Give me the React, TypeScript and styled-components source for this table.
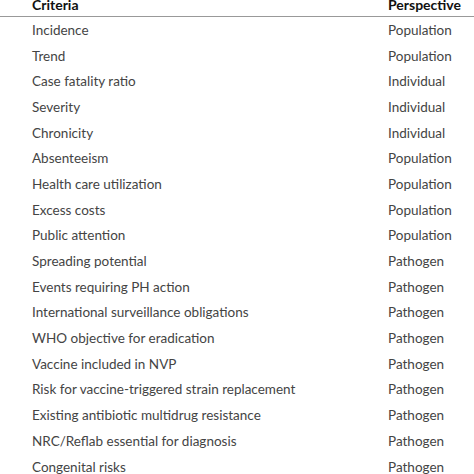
import React from "react";
import styled, { createGlobalStyle } from "styled-components";

const GlobalStyle = createGlobalStyle`
  html, body {
    margin: 0;
    padding: 0;
    background: #fff;
    overflow: hidden;
  }
  body {
    font-family: "Lato", "Open Sans", sans-serif;
  }
`;

const rows: [string, string][] = [
  ["Incidence", "Population"],
  ["Trend", "Population"],
  ["Case fatality ratio", "Individual"],
  ["Severity", "Individual"],
  ["Chronicity", "Individual"],
  ["Absenteeism", "Population"],
  ["Health care utilization", "Population"],
  ["Excess costs", "Population"],
  ["Public attention", "Population"],
  ["Spreading potential", "Pathogen"],
  ["Events requiring PH action", "Pathogen"],
  ["International surveillance obligations", "Pathogen"],
  ["WHO objective for eradication", "Pathogen"],
  ["Vaccine included in NVP", "Pathogen"],
  ["Risk for vaccine-triggered strain replacement", "Pathogen"],
  ["Existing antibiotic multidrug resistance", "Pathogen"],
  ["NRC/Reflab essential for diagnosis", "Pathogen"],
  ["Congenital risks", "Pathogen"],
];

const Table = styled.div`
  width: 474px;
  margin-top: -7px;
`;

const HeaderRow = styled.div`
  display: grid;
  grid-template-columns: 1fr 86px;
  padding-left: 32px;
  height: 24px;
  align-items: center;
  border-bottom: 1.5px solid #999;
  box-sizing: border-box;
`;

const HeaderCell = styled.div`
  font-size: 14px;
  font-weight: 700;
  color: #111;
`;

const Row = styled.div`
  display: grid;
  grid-template-columns: 1fr 86px;
  padding-left: 32px;
  height: 25.7px;
  align-items: center;
`;

const Cell = styled.div`
  font-size: 13.5px;
  color: #444;
  white-space: nowrap;
`;

export default function App() {
  return (
    <>
      <GlobalStyle />
      <Table>
        <HeaderRow>
          <HeaderCell>Criteria</HeaderCell>
          <HeaderCell>Perspective</HeaderCell>
        </HeaderRow>
        {rows.map(([c, p]) => (
          <Row key={c}>
            <Cell>{c}</Cell>
            <Cell>{p}</Cell>
          </Row>
        ))}
      </Table>
    </>
  );
}
